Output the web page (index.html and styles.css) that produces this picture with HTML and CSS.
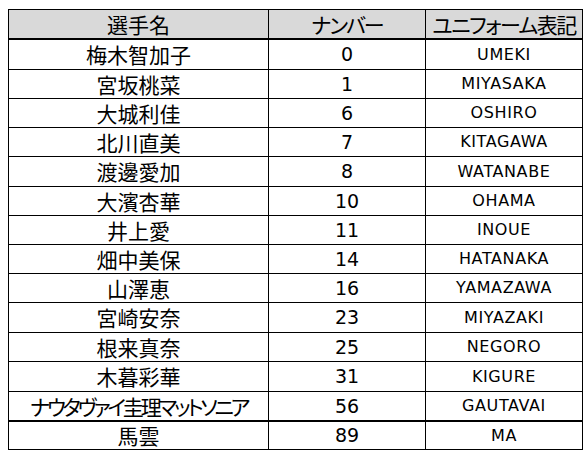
FILE: index.html
```html
<!DOCTYPE html>
<html lang="ja">
<head>
<meta charset="utf-8">
<link rel="stylesheet" href="styles.css">
</head>
<body>
<div class="roster">
  <div class="row head">
    <div class="cell jp">選手名</div><div class="cell jp kana">ナンバー</div><div class="cell jp kana2">ユニフォーム表記</div>
  </div>
  <div class="row tall"><div class="cell jp">梅木智加子</div><div class="cell num">0</div><div class="cell uni">UMEKI</div></div>
  <div class="row"><div class="cell jp">宮坂桃菜</div><div class="cell num">1</div><div class="cell uni">MIYASAKA</div></div>
  <div class="row"><div class="cell jp">大城利佳</div><div class="cell num">6</div><div class="cell uni">OSHIRO</div></div>
  <div class="row"><div class="cell jp">北川直美</div><div class="cell num">7</div><div class="cell uni">KITAGAWA</div></div>
  <div class="row tall"><div class="cell jp">渡邊愛加</div><div class="cell num">8</div><div class="cell uni">WATANABE</div></div>
  <div class="row"><div class="cell jp">大濱杏華</div><div class="cell num">10</div><div class="cell uni">OHAMA</div></div>
  <div class="row"><div class="cell jp">井上愛</div><div class="cell num">11</div><div class="cell uni">INOUE</div></div>
  <div class="row"><div class="cell jp">畑中美保</div><div class="cell num">14</div><div class="cell uni">HATANAKA</div></div>
  <div class="row"><div class="cell jp">山澤恵</div><div class="cell num">16</div><div class="cell uni">YAMAZAWA</div></div>
  <div class="row tall"><div class="cell jp">宮崎安奈</div><div class="cell num">23</div><div class="cell uni">MIYAZAKI</div></div>
  <div class="row"><div class="cell jp">根来真奈</div><div class="cell num">25</div><div class="cell uni">NEGORO</div></div>
  <div class="row tall"><div class="cell jp">木暮彩華</div><div class="cell num">31</div><div class="cell uni">KIGURE</div></div>
  <div class="row"><div class="cell jp tight">ナウタヴァイ圭理マットソニア</div><div class="cell num">56</div><div class="cell uni">GAUTAVAI</div></div>
  <div class="row last"><div class="cell jp">馬雲</div><div class="cell num">89</div><div class="cell uni">MA</div></div>
</div>
</body>
</html>
```
FILE: styles.css
```css
*, *::before, *::after {
  box-sizing: border-box;
}
html, body {
  margin: 0;
  padding: 0;
  background: #ffffff;
}
body {
  padding: 9px 0 0 8px;
}
.roster {
  width: 575px;
  border-top: 1px solid #000;
  border-left: 1px solid #000;
  color: #000;
  display: flex;
  flex-direction: column;
}
.row {
  display: grid;
  grid-template-columns: 260px 157px 157px;
  height: 29px;
  border-bottom: 1px solid #000;
}
.row.tall {
  height: 30px;
}
.row.head {
  background: #d9d9d9;
  height: 30px;
  border-bottom: 2px solid #000;
}
.row.last {
  border-top: 1px solid #000;
  height: 29px;
}
.cell {
  border-right: 1px solid #000;
  display: flex;
  align-items: center;
  justify-content: center;
  white-space: nowrap;
  line-height: 1;
}
.jp {
  font-family: "Noto Sans CJK JP", sans-serif;
  font-size: 21px;
  font-feature-settings: "palt";
}
.kana { letter-spacing: -2px; }
.kana2 { letter-spacing: -1.5px; }
.tight { letter-spacing: -3.2px; }
.num {
  font-family: "DejaVu Sans", sans-serif;
  font-size: 19px;
}
.uni {
  font-family: "DejaVu Sans", sans-serif;
  font-size: 16px;
  letter-spacing: 0.6px;
}
```
